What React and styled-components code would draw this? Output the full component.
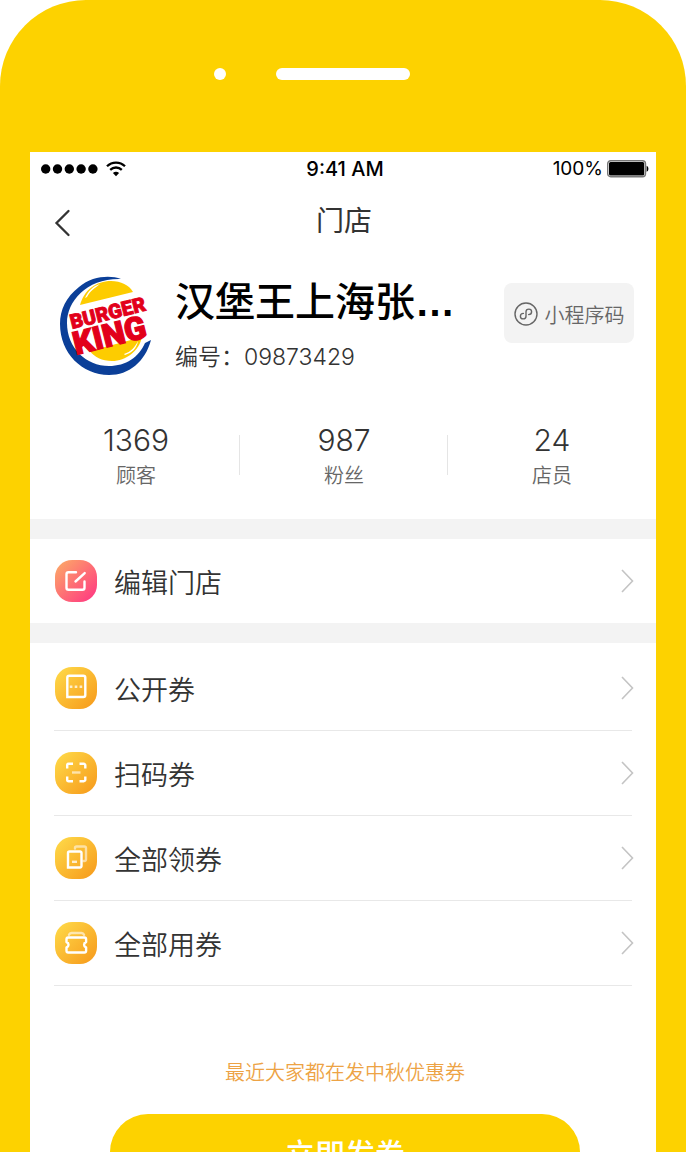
import React from 'react';
import styled, { createGlobalStyle } from 'styled-components';

const GlobalStyle = createGlobalStyle`
  * {
    box-sizing: border-box;
  }
  body {
    margin: 0;
    background: #fff;
    color: #333;
    font-family: Inter, "Noto Sans CJK SC", sans-serif;
    font-weight: 350;
  }
  button {
    border: 0;
    padding: 0;
    background: none;
    font: inherit;
    color: inherit;
    cursor: pointer;
  }
`;

const Phone = styled.div`
  display: flex;
  flex-direction: column;
  height: 100vh;
  overflow: hidden;
  padding: 0 30px;
  background: #fdd200;
  border-radius: 86px 86px 0 0;
`;

const Bezel = styled.div`
  flex: none;
  display: grid;
  grid-template-columns: 1fr 134px 1fr;
  align-items: center;
  height: 152px;
  padding-bottom: 4px;
`;

const Camera = styled.span`
  justify-self: end;
  width: 12px;
  height: 12px;
  margin-right: 50px;
  border-radius: 50%;
  background: #fff;
`;

const Speaker = styled.span`
  height: 12px;
  border-radius: 6px;
  background: #fff;
`;

const Screen = styled.main`
  flex: none;
  background: #fff;
`;

const StatusBar = styled.div`
  display: grid;
  grid-template-columns: 1fr auto 1fr;
  align-items: center;
  height: 34px;
  padding: 0 7px 0 11px;
  color: #000;
  font-size: 19px;
  font-weight: 400;
  line-height: 24px;
`;

const Time = styled.span`
  font-size: 20px;
  font-weight: 500;
`;

const Signal = styled.div`
  display: flex;
  align-items: center;
  gap: 8px;
`;

const Battery = styled.div`
  display: flex;
  align-items: center;
  justify-content: flex-end;
  gap: 4px;
`;

const Header = styled.header`
  display: grid;
  grid-template-columns: 62px 1fr 60px;
  align-items: center;
  height: 70px;
`;

const BackButton = styled.button`
  height: 60px;
  padding: 4px 0 0 24px;
  text-align: left;
  svg {
    display: block;
  }
`;

const Title = styled.h1`
  margin: 0;
  font-size: 28px;
  font-weight: 400;
  line-height: 40px;
  text-align: center;
`;

const Profile = styled.section`
  display: flex;
  align-items: flex-start;
  padding: 20px 22px 0 30px;
`;

const StoreInfo = styled.div`
  flex: 1;
  min-width: 0;
  padding-left: 22px;
`;

const StoreName = styled.h2`
  margin: 0;
  color: #000;
  font-size: 40px;
  font-weight: 500;
  line-height: 52px;
  white-space: nowrap;
`;

const Ellipsis = styled.span`
  font-family: "Liberation Sans", sans-serif;
  font-weight: 700;
`;

const StoreCode = styled.p`
  margin: 11px 0 0;
  font-size: 23px;
  line-height: 36px;
`;

const CodeButton = styled.button`
  display: flex;
  align-items: center;
  justify-content: center;
  gap: 7px;
  width: 130px;
  height: 60px;
  margin-top: 7px;
  padding-top: 2px;
  border-radius: 8px;
  background: #f3f3f3;
  color: #666;
  font-size: 20px;
  white-space: nowrap;
`;

const Stats = styled.section`
  display: flex;
  padding: 44px 0 28px 2px;
`;

const Stat = styled.div`
  position: relative;
  flex: 1;
  text-align: center;
  & + &::before {
    content: '';
    position: absolute;
    top: 15px;
    left: -1px;
    width: 1px;
    height: 40px;
    background: #e5e5e5;
  }
`;

const StatValue = styled.div`
  margin-bottom: 1px;
  font-size: 30px;
  line-height: 40px;
`;

const StatLabel = styled.div`
  color: #666;
  font-size: 20px;
  line-height: 30px;
`;

const Divider = styled.div`
  height: 20px;
  background: #f3f3f3;
`;

const Menu = styled.nav`
  padding: ${({ $lined }) => ($lined ? '3px 24px 0' : '0 24px')};
`;

const MenuItem = styled.button`
  display: flex;
  align-items: center;
  width: 100%;
  height: ${({ $lined }) => ($lined ? '85px' : '84px')};
  border-bottom: ${({ $lined }) => ($lined ? '1px solid #e8e8e8' : '0')};
`;

const MenuLabel = styled.span`
  flex: 1;
  padding: 6px 0 0 17px;
  font-size: 27px;
  line-height: 40px;
  text-align: left;
`;

const Footer = styled.footer`
  padding: 72px 76px 40px 80px;
  text-align: center;
`;

const Tip = styled.p`
  margin: 0;
  color: #eda345;
  font-size: 20px;
  line-height: 30px;
`;

const SendButton = styled.button`
  width: 100%;
  height: 76px;
  margin-top: 26px;
  border-radius: 38px;
  background: #fdd200;
  color: #fff;
  font-size: 30px;
  font-weight: 500;
`;

const ArrowSvg = styled.svg`
  margin-right: -2px;
`;

function WifiIcon() {
  return (
    <svg width="20" height="16" viewBox="0 0 20 16" fill="none" stroke="#000" strokeWidth="2.3">
      <path d="M1 5.2C6 .3 14 .3 19 5.2" />
      <path d="M4.2 8.8c3.3-3.1 8.3-3.1 11.6 0" />
      <path d="M6.9 12c1.8-1.7 4.4-1.7 6.2 0L10 15.2z" fill="#000" stroke="none" />
    </svg>
  );
}

function Dots() {
  return (
    <svg width="57" height="10" viewBox="0 0 57 10">
      {[0, 1, 2, 3, 4].map((i) => (
        <circle key={i} cx={4.7 + i * 11.8} cy="5" r="4.7" />
      ))}
    </svg>
  );
}

function BatteryIcon() {
  return (
    <svg width="42" height="18" viewBox="0 0 42 18">
      <rect x="0.7" y="0.7" width="37.8" height="16" rx="3" fill="#fff" stroke="#777" strokeWidth="1.4" />
      <rect x="2" y="2" width="35.2" height="13.4" rx="1.5" />
      <path d="M39.6 5.7c2.4.8 2.4 5.3 0 6z" />
    </svg>
  );
}

function Logo() {
  return (
    <svg width="93" height="100" viewBox="0 0 93 100" role="img" aria-label="Burger King">
      <path d="M61 3C50-1 32 0 19 11 6 21 0 34 0 48c0 29 22 51 49 51 20 0 36-13 42-35l-6 3C79 81 66 90 49 90 26 90 7 72 7 47 7 25 27 2 61 3z" fill="#0b3f98" />
      <path d="M20 29C24 14 36 5 51 5c10 0 18 4 22 11z" fill="#fdcc00" />
      <path d="M30 75l52-14c-3 14-16 24-30 24-10 0-18-4-22-10z" fill="#fdcc00" />
      <path d="M25 22c3-7 8-12 15-14-5 4-10 7-13 13zM64 78c7-2 11-7 14-13-1 7-6 12-13 14z" fill="#fff" />
      <g fill="#e2001a" stroke="#e2001a" fontFamily="Roboto, sans-serif" fontWeight="900">
        <text x="12" y="53" fontSize="20" strokeWidth="0.9" transform="rotate(-14 12 53)">BURGER</text>
        <text x="16" y="79" fontSize="32" strokeWidth="1.2" transform="rotate(-14 16 79)">KING</text>
      </g>
    </svg>
  );
}

function MiniProgramIcon() {
  return (
    <svg width="24" height="24" viewBox="0 0 24 24" fill="none" stroke="#666" strokeWidth="1.4" strokeLinecap="round">
      <circle cx="12" cy="12" r="11" />
      <path d="M9.4 11.4c-1.7 0-3 1-3 2.8s1.2 2.7 2.7 2.7c1.6 0 2.9-1.2 2.9-2.7V9.8c0-1.5 1.3-2.7 2.9-2.7 1.5 0 2.7 1 2.7 2.7s-1.3 2.8-3 2.8" />
    </svg>
  );
}

function Arrow() {
  return (
    <ArrowSvg width="13" height="24" viewBox="0 0 13 24" fill="none" stroke="#c4c4c4" strokeWidth="1.6">
      <path d="M1 1l10.5 11L1 23" />
    </ArrowSvg>
  );
}

const glyphs = {
  edit: (
    <>
      <path d="M21 12.8h-7.5a2 2 0 0 0-2 2v13.5a2 2 0 0 0 2 2h14a2 2 0 0 0 2-2V22" />
      <path d="M20.5 22l9.2-8.4" />
    </>
  ),
  open: (
    <>
      <path d="M12.3 30.5V11.3a2 2 0 0 1 2-2h14a2 2 0 0 1 2 2v17.2a2 2 0 0 1-2 2z" strokeLinejoin="miter" />
      <path d="M14.8 20.3h2.6M19.7 20.3h2.6M24.6 20.3h2.6" opacity=".75" strokeLinecap="butt" />
    </>
  ),
  scan: (
    <>
      <path d="M12.2 17v-3.2a1.5 1.5 0 0 1 1.5-1.5H18M24.5 12.3h4.3a1.5 1.5 0 0 1 1.5 1.5V17M30.3 25v3.2a1.5 1.5 0 0 1-1.5 1.5h-4.3M18 29.7h-4.3a1.5 1.5 0 0 1-1.5-1.5V25" strokeLinecap="butt" />
      <path d="M17 21h8.5" opacity=".6" strokeLinecap="butt" />
    </>
  ),
  receive: (
    <>
      <path d="M20 12v-.5a1.5 1.5 0 0 1 1.5-1.5h8a1.5 1.5 0 0 1 1.5 1.5V23a1.5 1.5 0 0 1-1.5 1.5h-1" opacity=".55" />
      <path d="M13 31V16.5a1.5 1.5 0 0 1 1.5-1.5H25a1.5 1.5 0 0 1 1.5 1.5v13A1.5 1.5 0 0 1 25 31z" strokeLinejoin="miter" />
      <path d="M17 25.3h5" opacity=".75" strokeLinecap="butt" />
    </>
  ),
  use: (
    <>
      <path d="M14 13.3c.5-1.3 1-1.8 2.500-1.800h10c1.500 0 2 .5 2.500 1.800" opacity=".6" />
      <path d="M13.2 16h16.2a1.7 1.7 0 0 1 1.7 1.7v2.8c-2.7 1-2.7 4.500 0 5.500v3.300a1.700 1.700 0 0 1-1.700 1.700H13.200a1.700 1.700 0 0 1-1.700-1.700V26c2.700-1 2.700-4.500 0-5.500v-2.800a1.700 1.700 0 0 1 1.700-1.700z" />
    </>
  ),
};

function MenuIcon({ name, from, to }) {
  return (
    <svg width="43" height="42" viewBox="0 0 43 42" fill="none">
      <defs>
        <linearGradient id={`bg-${name}`} x1="0" y1="0" x2="1" y2="1">
          <stop offset="0.1" stopColor={from} />
          <stop offset="0.9" stopColor={to} />
        </linearGradient>
      </defs>
      <rect x="1" y="0" width="42" height="42" rx="17" fill={`url(#bg-${name})`} />
      <g transform="translate(1 -0.5)" stroke="#fff" strokeWidth="2.4" strokeLinecap="round" strokeLinejoin="round">
        {glyphs[name]}
      </g>
    </svg>
  );
}

const stats = [
  { value: '1369', label: '顾客' },
  { value: '987', label: '粉丝' },
  { value: '24', label: '店员' },
];

const coupons = [
  { icon: 'open', label: '公开券' },
  { icon: 'scan', label: '扫码券' },
  { icon: 'receive', label: '全部领券' },
  { icon: 'use', label: '全部用券' },
];

export default function App() {
  return (
    <>
      <GlobalStyle />
      <Phone>
        <Bezel>
          <Camera />
          <Speaker />
        </Bezel>
        <Screen>
          <StatusBar>
            <Signal>
              <Dots />
              <WifiIcon />
            </Signal>
            <Time>9:41 AM</Time>
            <Battery>
              <span>100%</span>
              <BatteryIcon />
            </Battery>
          </StatusBar>
          <Header>
            <BackButton aria-label="返回">
              <svg width="17" height="28" viewBox="0 0 17 28" fill="none" stroke="#333" strokeWidth="2.3" strokeLinecap="round">
                <path d="M14.5 2L2.5 14l12 12" />
              </svg>
            </BackButton>
            <Title>门店</Title>
          </Header>
          <Profile>
            <Logo />
            <StoreInfo>
              <StoreName>汉堡王上海张<Ellipsis>…</Ellipsis></StoreName>
              <StoreCode>编号：09873429</StoreCode>
            </StoreInfo>
            <CodeButton>
              <MiniProgramIcon />
              小程序码
            </CodeButton>
          </Profile>
          <Stats>
            {stats.map((item) => (
              <Stat key={item.label}>
                <StatValue>{item.value}</StatValue>
                <StatLabel>{item.label}</StatLabel>
              </Stat>
            ))}
          </Stats>
          <Divider />
          <Menu>
            <MenuItem>
              <MenuIcon name="edit" from="#fca269" to="#ff3f80" />
              <MenuLabel>编辑门店</MenuLabel>
              <Arrow />
            </MenuItem>
          </Menu>
          <Divider />
          <Menu $lined>
            {coupons.map((item) => (
              <MenuItem key={item.icon} $lined>
                <MenuIcon name={item.icon} from="#fed545" to="#f79f1f" />
                <MenuLabel>{item.label}</MenuLabel>
                <Arrow />
              </MenuItem>
            ))}
          </Menu>
          <Footer>
            <Tip>最近大家都在发中秋优惠券</Tip>
            <SendButton>立即发券</SendButton>
          </Footer>
        </Screen>
      </Phone>
    </>
  );
}
